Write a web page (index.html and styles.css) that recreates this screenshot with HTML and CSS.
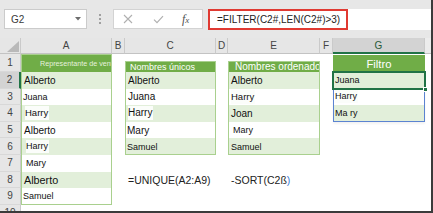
FILE: index.html
```html
<!DOCTYPE html>
<html lang="es">
<head>
<meta charset="utf-8">
<title>FILTER</title>
<link rel="stylesheet" href="styles.css">
</head>
<body>
<div class="app">
  <div class="toolbar">
    <div class="namebox">
      <span>G2</span>
      <svg class="caret" width="6" height="4" viewBox="0 0 6 4"><path d="M0 0H6L3 3.5Z" fill="#6d6d6d"/></svg>
    </div>
    <div class="grip"><i></i><i></i><i></i></div>
    <div class="fxbox">
      <svg class="ico" width="10" height="10" viewBox="0 0 10 10"><path d="M1 1L9 9M9 1L1 9" stroke="#b0b0b0" stroke-width="1.1" fill="none"/></svg>
      <svg class="ico ok" width="11" height="9" viewBox="0 0 11 9"><path d="M1 4.6L4 7.6L10 1.2" stroke="#b0b0b0" stroke-width="1.2" fill="none"/></svg>
      <span class="fx">f<span class="x">x</span></span>
    </div>
    <div class="formula">
      <div class="formula-hl">=FILTER(C2#,LEN(C2#)&gt;3)</div>
    </div>
  </div>

  <div class="sheet">
    <div class="corner"><svg width="12" height="11" viewBox="0 0 12 11"><path d="M12 0V11H0Z" fill="#b9b9b9"/></svg></div>
    <div class="ch">A</div>
    <div class="ch">B</div>
    <div class="ch">C</div>
    <div class="ch">D</div>
    <div class="ch">E</div>
    <div class="ch">F</div>
    <div class="ch sel">G</div>
    <div class="ch last"></div>

    <div class="rows">
      <div class="rn r1">1</div>
      <div class="rn sel">2</div>
      <div class="rn">3</div>
      <div class="rn">4</div>
      <div class="rn">5</div>
      <div class="rn">6</div>
      <div class="rn">7</div>
      <div class="rn">8</div>
      <div class="rn">9</div>
      <div class="rn">10</div>
    </div>

    <div class="col">
      <div class="tbl">
        <div class="cell r1 hd tiny">Representante de ventas</div>
        <div class="cell g s10">Alberto</div>
        <div class="cell s9 p2">Juana</div>
        <div class="cell g s95 p4"><span class="patch">Harry</span></div>
        <div class="cell s10">Alberto</div>
        <div class="cell g s9 p5"><span class="patch">Harry</span></div>
        <div class="cell s9 p5">Mary</div>
        <div class="cell g s11">Alberto</div>
        <div class="cell s9 p2">Samuel</div>
      </div>
    </div>

    <div class="col"></div>

    <div class="col">
      <div class="gap7"></div>
      <div class="tbl">
        <div class="cell hd short s9 p5">Nombres únicos</div>
        <div class="cell g s10">Alberto</div>
        <div class="cell s10">Juana</div>
        <div class="cell g s10"><span class="patch">Harry</span></div>
        <div class="cell s10 p2">Mary</div>
        <div class="cell g s9 p2">Samuel</div>
      </div>
      <div class="cell"></div>
      <div class="cell fml">=UNIQUE(A2:A9)</div>
    </div>

    <div class="col"></div>

    <div class="col">
      <div class="gap7"></div>
      <div class="tbl">
        <div class="cell hd short s10 p7">Nombres ordenado</div>
        <div class="cell g s10">Alberto</div>
        <div class="cell s95"><span class="patch">Harry</span></div>
        <div class="cell g s10">Joan</div>
        <div class="cell s9 p5">Mary</div>
        <div class="cell g s9">Samuel</div>
      </div>
      <div class="cell"></div>
      <div class="cell fml s10">-SORT(C2ß<span class="blue">)</span></div>
    </div>

    <div class="col"></div>

    <div class="col">
      <div class="gap1"></div>
      <div class="cell hd tall">Filtro</div>
      <div class="spill">
        <div class="cell g s9 p2 active">Juana<span class="handle"></span></div>
        <div class="cell s9 p2"><span class="patch">Harry</span></div>
        <div class="cell g s9 p2">Ma ry</div>
      </div>
    </div>

    <div class="col"></div>
  </div>
</div>
</body>
</html>
```

FILE: styles.css
```css
* { box-sizing: border-box; margin: 0; padding: 0; }

html, body {
  width: 433px;
  height: 213px;
  overflow: hidden;
  background: #fff;
}

body {
  font-family: "Liberation Sans", Arial, sans-serif;
  color: #111;
}

.app {
  width: 433px;
  height: 213px;
  display: flex;
  flex-direction: column;
  border-right: 2px solid #3b3b3b;
  border-bottom: 2px solid #3b3b3b;
  overflow: hidden;
}

/* ---------- formula bar ---------- */
.toolbar {
  flex: none;
  height: 38px;
  background: #e7e7e7;
  display: flex;
  align-items: flex-start;
  padding: 9px 0 0 4px;
}

.namebox {
  width: 83px;
  height: 20px;
  background: #fff;
  border: 1px solid #cbcbcb;
  display: flex;
  align-items: center;
  justify-content: space-between;
  padding: 0 5px 0 6px;
  font-size: 10px;
  color: #3a3a3a;
}

.grip {
  width: 26px;
  height: 20px;
  display: flex;
  flex-direction: column;
  align-items: center;
  justify-content: center;
  gap: 2px;
}

.grip i {
  display: block;
  width: 2px;
  height: 2px;
  background: #a0a0a0;
}

.fxbox {
  width: 90px;
  height: 20px;
  background: #fff;
  border: 1px solid #d3d3d3;
  display: flex;
  align-items: center;
  padding-left: 9px;
}

.fxbox .ok { margin-left: 20px; }

.fx {
  margin-left: 18px;
  font-family: "Liberation Serif", serif;
  font-style: italic;
  font-size: 12px;
  color: #505050;
}

.fx .x { font-size: 9px; }

.formula {
  flex: 1;
  height: 21px;
  margin-left: 5px;
  background: #fff;
}

.formula-hl {
  width: 140px;
  height: 21px;
  border: 2px solid #e03a32;
  display: flex;
  align-items: center;
  padding-left: 7px;
  font-size: 10px;
  color: #222;
  white-space: nowrap;
}

/* ---------- sheet ---------- */
.sheet {
  flex: 1;
  min-height: 0;
  display: grid;
  grid-template-columns: 21px 91px 13px 91px 12px 92px 13px 92px 1fr;
  grid-template-rows: 16px 1fr;
}

.corner, .ch {
  background: #e6e6e6;
  border-right: 1px solid #cacaca;
  border-bottom: 1px solid #c3c3c3;
}

.corner {
  display: flex;
  align-items: flex-end;
  justify-content: flex-end;
  padding: 0 1px 1px 0;
}

.ch {
  display: flex;
  align-items: center;
  justify-content: center;
  font-size: 10px;
  color: #444;
}

.ch.sel {
  background: #d3d3d3;
  border-bottom: 2px solid #217346;
  color: #2a5a3a;
}

.ch.last {
  border-right: 0;
  background: #ececec;
}

.rows {
  background: #e6e6e6;
  display: flex;
  flex-direction: column;
}

.rn {
  flex: none;
  height: 16.6px;
  display: flex;
  align-items: center;
  justify-content: center;
  font-size: 10px;
  color: #444;
  border-right: 1px solid #cacaca;
  border-bottom: 1px solid #d8d8d8;
}

.rn.r1 { height: 18px; }

.rn.sel {
  background: #d3d3d3;
  border-right: 2px solid #217346;
}

.col {
  display: flex;
  flex-direction: column;
  min-width: 0;
}

.gap7 { flex: none; height: 7px; }
.gap1 { flex: none; height: 1px; }

.cell {
  flex: none;
  height: 16.6px;
  display: flex;
  align-items: center;
  padding-left: 3px;
  white-space: nowrap;
  font-size: 10px;
}

.cell.r1 { height: 18px; }
.cell.short { height: 11px; }
.cell.tall { height: 17px; }

.tbl {
  display: flex;
  flex-direction: column;
  outline: 1px solid #a9d08e;
  outline-offset: -1px;
}

.hd {
  background: #70ad47;
  color: #fff;
  overflow: hidden;
}

.hd.tiny {
  font-size: 7.2px;
  padding-left: 19px;
  color: #e6f2de;
}

.hd.tall {
  justify-content: center;
  padding-left: 0;
  font-size: 11.3px;
}

.g { background: #e2efda; }

.s9 { font-size: 9px; }
.s95 { font-size: 9.5px; }
.s10 { font-size: 10px; }
.s11 { font-size: 10.8px; }

.p2 { padding-left: 2px; }
.p4 { padding-left: 4px; }
.p5 { padding-left: 5px; }
.p7 { padding-left: 7px; }

.patch {
  background: #fbfdfa;
  padding: 1px 1px 2px 0;
}

.fml {
  font-size: 10.5px;
  color: #222;
  overflow: visible;
}

.blue { color: #3a7bd5; }

.spill {
  display: flex;
  flex-direction: column;
  outline: 1px solid #5b83d1;
  outline-offset: -1px;
  box-shadow: 0 2px 2px rgba(0, 0, 0, 0.05);
}

.active {
  position: relative;
  outline: 2px solid #217346;
  outline-offset: -1px;
}

.handle {
  position: absolute;
  right: -3px;
  bottom: -3px;
  width: 5px;
  height: 5px;
  background: #217346;
  border: 1px solid #fff;
}
```
